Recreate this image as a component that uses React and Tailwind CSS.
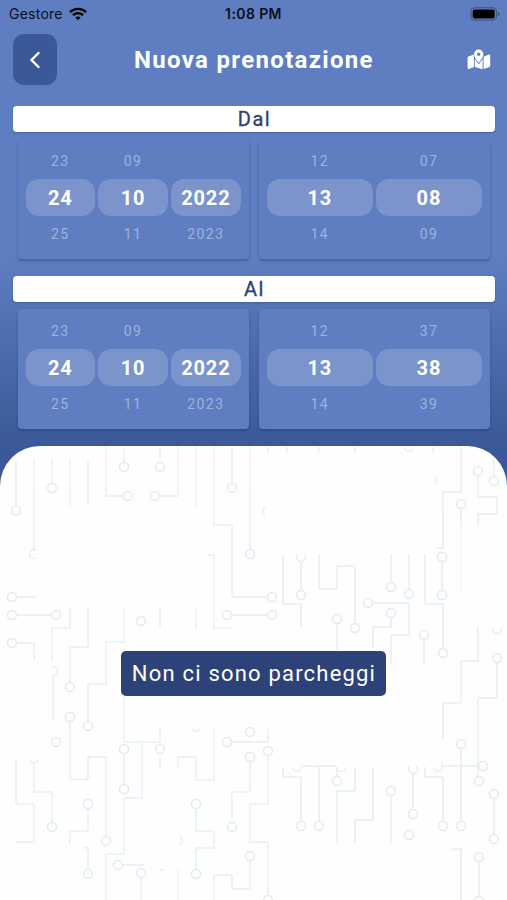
const TRACES = [
  ["#e8eef7", "M16 460V505.5M34 460V549M70 460V506M88 460V506M106 446V496H123M178 446V496H160M232 448V483M250 446V549M17 597H36M17 615H51M232 615H267M232 597H267M17 643H34V660M53 676V720M88 607V647H70V682M106 642V684H88V721M70 722V779.5M88 757H106V836M124 754V784M142 742V798H124M106 854V900M88 809V831M70 831V844M16 760V804M34 804V842H15M34 762V792M123 865H144M178 768V757H196V780M232 742H268V729M250 762V792M250 804V842H268M232 875V889H250V861M214 831V848"],
  ["#e4f2f5", "M52 460V483M124 448V462M160 448V462M196 446V506M214 446V525H232V597M214 555V628H232M70 628H52V660M124 607V642H106M160 607V628M196 607V628M124 696V742H160M70 779.5H88M160 754V768M124 798V854H106M88 831H70M16 804H34M34 792H52V822M84 848H88V869M141 878V900M196 780H214V729M250 792H232V822M178 870V900M196 809V831H214M214 848H196V869M214 900V875M268 756V804H250M268 842V895M214 875H232"],
  ["#e8edf5", "M207 555H214M70 607V628M160 729V742M88 757V779.5M461 446V492H443V548H437M461 509V526M478 476V497H497V514H478V526M494 458V476M283 554V604H301V628M301 562V590M319 554V589M355 566V623M425 554V604M443 604V648M442 562V590M391 618V627H373V648M478 627V661H461M461 703H443V740M497 663V698H478M461 749V821M283 767V777M301 777V821M319 767V821M355 767V791M373 767V820H355V843M425 767V777M443 777V821M452 849H461V900M479 862V896M494 799V834M413 774V808M302 766H336"],
  ["#e3f0f6", "M319 589H337V566H355M391 554V582M409 554V589M425 604H443M373 603H409V635H391V665M337 624V650M424 640V665M461 661V703M478 698V776M442 762V766H478M283 777H301M337 767V776M355 791H337V843M391 796V843M425 777H443"],
  ["#f4f7fb", "M461 526V592"],
];

const NODES = [
  [16,510.5],[52,488],[128,496],[124,467],[160,467],[155,496],[272,597],[232,488],[250,554],
  [12,597],[12,615],[56,615],[227,615],[272,615],[141,621],[70,687],[88,726],[12,643],[70,717],
  [106,841],[56,742],[124,749],[124,789],[160,749],[88,804],[52,827],[88,874],[118,865],[141,873],
  [227,742],[250,732],[250,757],[232,827],[196,804],[196,874],[250,856],[268,900],[268,751],
  [461,504],[478,471],[494,481],[301,595],[355,628],[391,587],[409,594],[443,653],
  [442,557],[442,595],[368,603],[391,613],[337,619],[424,635],[497,658],[479,781],[461,744],
  [461,826],[483,766],[301,826],[319,826],[337,781],[391,791],[413,814],[409,835],[443,826],
  [494,794],[494,839],[479,857],[479,901],
];

const ARCS =
  "M36 550A4.5 4.5 0 1 0 36 558M53 666.500A4.500 4.500 0 0 1 53 675.500M29.800 760A4.500 4.500 0 0 0 38.200 760M180 837A4.500 4.500 0 0 1 180 845M192 729A4.500 4.500 0 0 0 200 729M265 507A5 5 0 0 0 265 515M435 476.500A5 5 0 0 1 435 484M297.500 554A4.500 4.500 0 1 0 304.500 554M492.500 629A4.500 4.500 0 0 0 501.500 629M433.500 767A4.500 4.500 0 0 0 442.500 767M292.500 767A4.500 4.500 0 0 0 301.500 767M336.500 767A4.500 4.500 0 0 0 345.500 767M409.500 766A4.500 4.500 0 1 0 416.500 766M404.500 447A4.500 4.500 0 0 0 413.500 447M268 447V453M287 447V453M319 447V452M355 447V453M433 447V453M160 870H165";

function CircuitPattern() {
  return (
    <svg className="absolute inset-0" width="507" height="454" viewBox="0 446 507 454" fill="none" strokeWidth="1.5">
      {TRACES.map(([color, d]) => (
        <path key={d} d={d} stroke={color} />
      ))}
      {NODES.map(([x, y]) => (
        <circle key={`${x}-${y}`} cx={x} cy={y} r="4.5" stroke="#e2ebf3" fill="#fefefe" />
      ))}
      <path d={ARCS} stroke="#e8eef4" />
    </svg>
  );
}

function MapIcon() {
  return (
    <svg className="mt-[15px]" width="24" height="21" viewBox="0 0 24 21" fill="#fff">
      <path d="M.6 9Q.6 8 1.500 7.600L6.900 5.500V18L1.800 20Q.6 20.300 .6 19.300Z" />
      <path d="M7.800 9.800L11.700 15.600L15.600 9.800V20.200L7.800 17.900Z" />
      <path d="M16.600 7.700L22 5.600Q23.200 5.200 23.200 6.300V16.700Q23.200 17.600 22.400 17.900L16.600 20.100Z" />
      <path
        fillRule="evenodd"
        d="M11.700 .5A4.700 4.700 0 0 1 16.400 5.200C16.400 7.700 13.500 11.300 11.700 13.900C9.900 11.300 7 7.700 7 5.200A4.700 4.700 0 0 1 11.700 .5ZM11.700 3.500A1.700 1.700 0 1 0 11.700 6.900A1.700 1.700 0 1 0 11.700 3.500Z"
      />
    </svg>
  );
}

function Column({ before, value, after }) {
  return (
    <div className="flex flex-1 flex-col items-center tracking-[1.4px]">
      <div className="flex h-[37px] items-center text-sm text-[#9db3dd]">{before}</div>
      <div className="flex h-[37px] w-full items-center justify-center rounded-[13px] bg-[#7b94cc] text-xl font-bold tracking-[0.9px] text-white">
        {value}
      </div>
      <div className="flex h-[36px] items-center text-sm text-[#9db3dd]">{after}</div>
    </div>
  );
}

function Wheel({ columns }) {
  return (
    <div className="flex h-full flex-1 gap-[3px] rounded-[4px] bg-[#5e7ec1] px-2 pt-[3px] shadow-[0_2px_3px_rgba(25,45,95,0.38)]">
      {columns.map((c, i) => (
        <Column key={i} before={c[0]} value={c[1]} after={c[2]} />
      ))}
    </div>
  );
}

function Section({ title, date, time }) {
  return (
    <section>
      <h2 className="flex h-[26px] items-center justify-center rounded-[4px] bg-white pl-px text-xl font-normal tracking-[1.5px] text-[#2d4279] shadow-[0_1px_2px_rgba(25,45,95,0.3)] [-webkit-text-stroke:0.35px_#2d4279]">
        {title}
      </h2>
      <div className="mt-[7px] flex h-[120px] gap-[10px] pr-[5px] pl-[4.5px]">
        <Wheel columns={date} />
        <Wheel columns={time} />
      </div>
    </section>
  );
}

const DATE = [["23", "24", "25"], ["09", "10", "11"], ["", "2022", "2023"]];

export default function App() {
  return (
    <div className="flex h-[900px] w-[507px] flex-col overflow-hidden bg-[linear-gradient(to_bottom,#5e7ec1_0px,#5e7ec1_255px,#3a5897_450px,#3a5897_900px)] font-['Roboto',sans-serif]">
      <div className="grid h-7 grid-cols-3 items-center pl-[9px] pr-[7px] font-['Inter',sans-serif] text-sm text-[#0b0f18]">
        <div className="flex items-center gap-[6px]">
          <span className="tracking-[0.25px]">Gestore</span>
          <svg width="18" height="14" viewBox="0 0 18 14" fill="none" stroke="#000" strokeWidth="2.4">
            <path d="M1 5.200C5.500 .7 12.500 .7 17 5.200M4 8.200C7 5.400 11 5.400 14 8.200" />
            <path d="M9 13.300L6.300 10.600C7.800 9.200 10.200 9.200 11.700 10.600Z" fill="#000" stroke="none" />
          </svg>
        </div>
        <span className="pr-[2px] text-center text-[14px] font-semibold tracking-[0.4px]">1:08 PM</span>
        <svg className="justify-self-end" width="30" height="14" viewBox="0 0 30 14">
          <rect x="1" y=".8" width="25.500" height="12.400" rx="3.500" fill="none" stroke="#3d5078" strokeWidth="1" />
          <rect x="2.700" y="2.500" width="22" height="9" rx="2" fill="#000" />
          <path d="M28 5C30 5.500 30 8.500 28 9Z" fill="#3d5078" />
        </svg>
      </div>
      <header className="flex h-[78px] items-start justify-between pt-[6px] pr-4 pl-[13px]">
        <button className="flex h-[51px] w-11 items-center justify-center rounded-[11px] bg-[#3b5998] pr-px">
          <svg width="12" height="18" viewBox="0 0 12 18" fill="none" stroke="#fff" strokeWidth="2.400" strokeLinecap="round">
            <path d="M9.500 2L2.500 9L9.500 16" />
          </svg>
        </button>
        <h1 className="mt-[10px] ml-[-16px] text-2xl leading-8 font-bold tracking-[1.32px] text-white">Nuova prenotazione</h1>
        <MapIcon />
      </header>
      <main className="flex h-[340px] shrink-0 flex-col gap-[17px] pr-3 pl-[13px]">
        <Section title="Dal" date={DATE} time={[["12", "13", "14"], ["07", "08", "09"]]} />
        <Section title="Al" date={DATE} time={[["12", "13", "14"], ["37", "38", "39"]]} />
      </main>
      <div className="relative flex flex-1 items-center justify-center overflow-hidden rounded-t-[40px] bg-[#fefefe]">
        <CircuitPattern />
        <p className="relative flex h-[45px] w-[265px] items-center justify-center rounded-[5px] bg-[#2d4279] pl-px text-[22px] whitespace-nowrap tracking-[1.2px] text-white">
          Non ci sono parcheggi
        </p>
      </div>
    </div>
  );
}
